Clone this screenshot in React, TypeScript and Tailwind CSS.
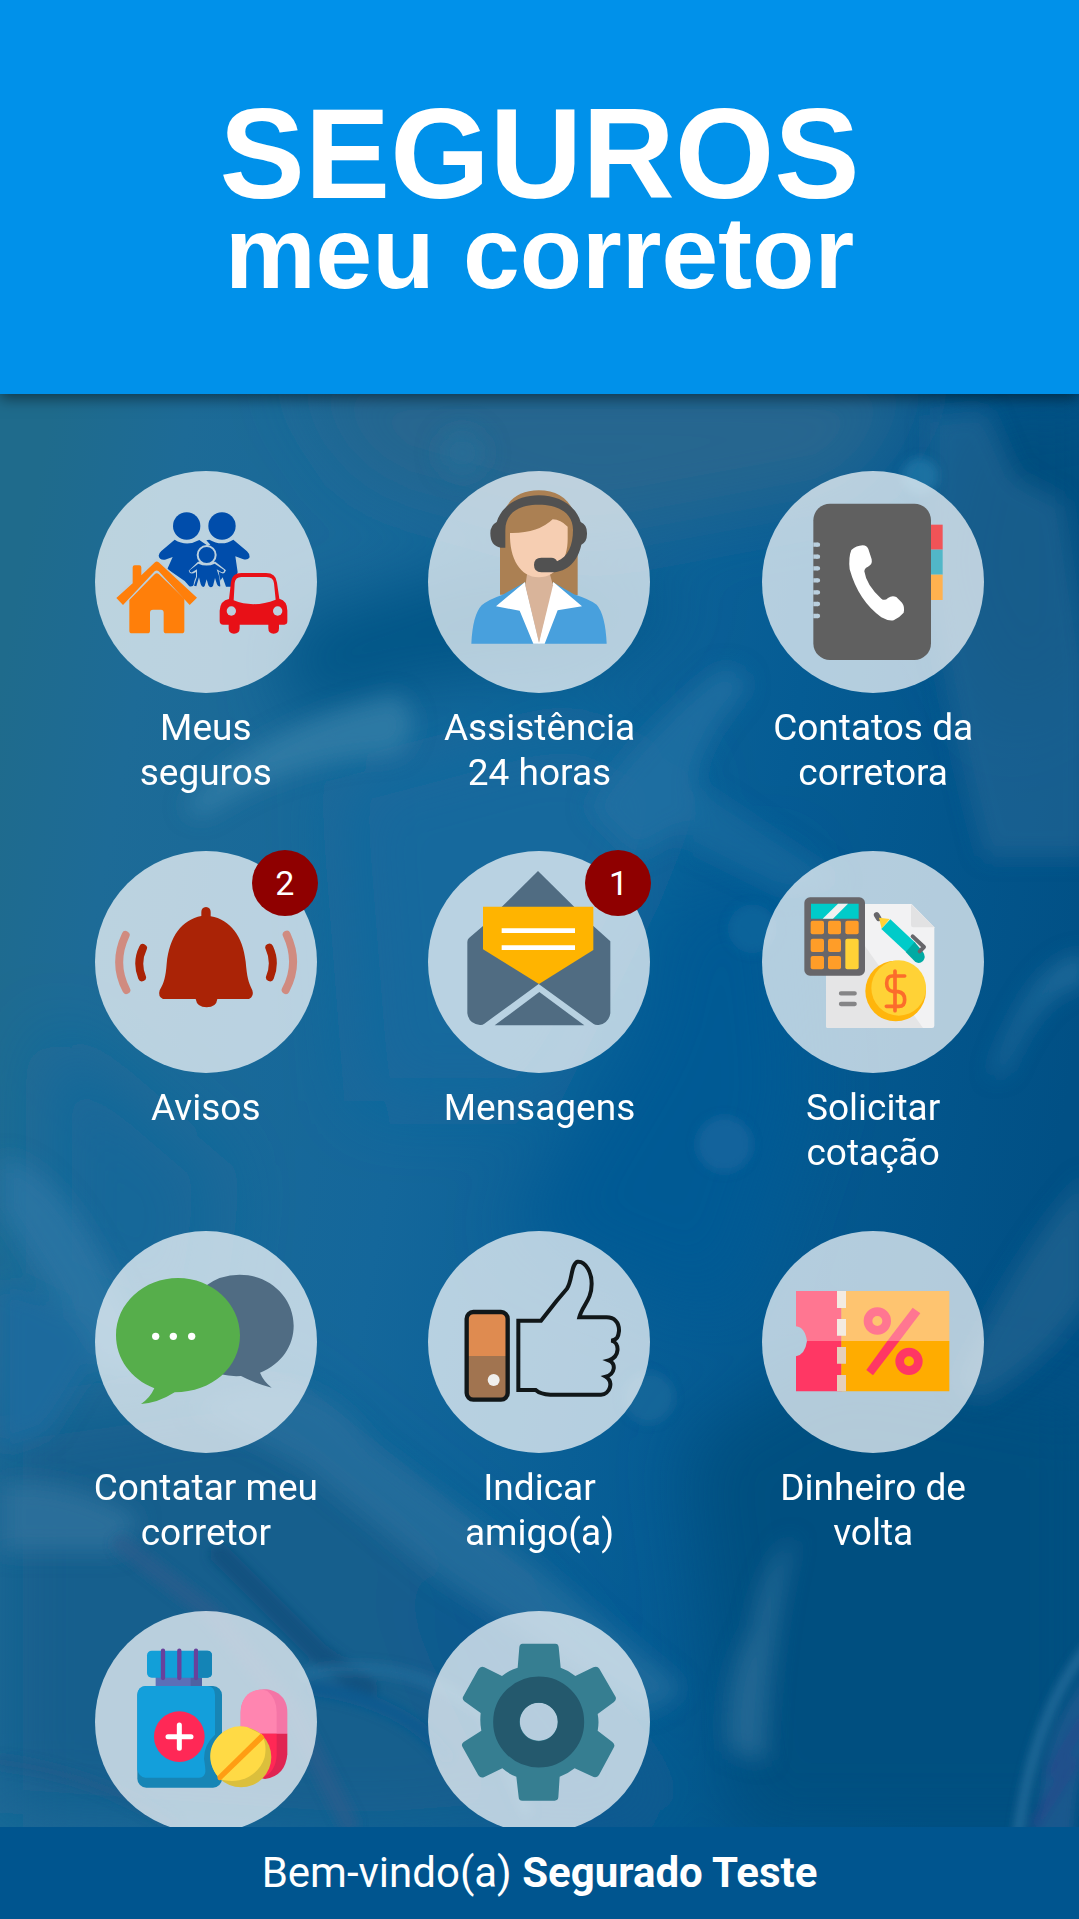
import type { ReactNode } from "react";

const halo = "#bbd0de";

function Insurance() {
  return (
    <>
      <g fill="#004dab">
        <circle cx="290" cy="196" r="41" />
        <circle cx="396" cy="196" r="41" />
        <path d="M254 237Q290 259 328 238L351 254V378H322Q316 376 314 366Q310 380 298 377L284 361L232 325L248 289L225 297Q208 299 206 285Q207 277 214 271Z" />
        <path d="M349 239L358 237Q396 259 430 237L471 272Q480 280 479 290Q473 300 458 295L436 287L443 335L426 378H408L398 350L378 378H340V262L361 252Z" />
      </g>
      <path d="M296 330Q300 345 318 334L318 349Q308 368 312 384H398L388 345L386 332Q402 346 408 329L376 303H324Z" fill={halo} />
      <g fill="#004dab">
        <path d="M325 309Q350 320 374 309L402 328Q404 336 394 334L380 326L388 349L391 377Q384 379 381 371L375 352L369 376Q361 385 355 374L350 356L344 376Q337 384 332 370L327 350L319 377L312 375L321 348V326L306 335Q298 336 299 329Z" />
        <circle cx="350" cy="283" r="27" stroke={halo} strokeWidth="6" />
      </g>
      <path d="M200 292L90 393L99 433L118 420L200 343L290 420L310 400Z" fill={halo} />
      <g fill="#ff7f0a">
        <path d="M128 320Q128 314 134 314H148Q154 314 154 320V344L195 305Q200 300 206 305L321 411L299 433L206 332Q200 327 194 332L99 433L79 412L128 368Z" />
        <path d="M194 341Q200 335 207 341L283 414V510Q283 518 275 518H229Q221 518 221 510V456Q221 447 213 447H189Q180 447 180 456V510Q180 518 172 518H126Q118 518 118 510V418Z" />
      </g>
      <path d="M417 415L423 364Q426 337 454 337H528Q558 337 561 366L568 414Q592 420 592 450V482Q592 492 583 492H567V503Q567 519 551 519Q535 519 535 503V492H449V503Q449 519 432 519Q416 519 416 503V492H400Q389 492 389 481V450Q391 419 417 415ZM431 419Q490 443 557 417L552 368Q550 349 529 349H454Q436 349 434 367Z" fill="#e81017" fillRule="evenodd" />
      <circle cx="424" cy="451" r="14" fill={halo} />
      <circle cx="563" cy="451" r="14" fill={halo} />
    </>
  );
}

function Attendant() {
  return (
    <>
      <path d="M242 402V220C242 135 284 89 358 89C432 89 475 136 475 220V404Z" fill="#ab8053" />
      <path d="M156 549Q160 463 187 434Q206 417 250 402L317 365L358 549ZM562 549Q558 461 532 432Q512 417 464 401L401 365L360 549Z" fill="#48a0dd" />
      <path d="M317 364L230 437L301 450L342 549H376L415 449L488 437L402 364L396 380L359 545L320 380Z" fill="#fff" />
      <path d="M318 375L359 546L401 374L390 335H324Z" fill="#d9b49a" />
      <path d="M272 217Q355 219 400 176Q424 177 445 198V235C445 295 415 349 358 350C303 349 270 295 272 217Z" fill="#f6ceb2" />
      <path d="M258 261H244Q213 256 213 218Q213 194 232 184C248 132 300 104 358 104C419 104 470 135 484 184Q504 192 503 220Q503 244 486 252C476 300 445 334 398 335H366Q344 335 344 313Q344 291 366 291H396Q409 291 413 302C446 288 461 255 461 207C461 158 418 132 358 132C298 132 258 157 258 209Z" fill="#515151" />
    </>
  );
}

function PhoneBook() {
  return (
    <>
      <path d="M540 192H578V267H540Z" fill="#f15357" />
      <path d="M540 267H578V342H540Z" fill="#51b7c8" />
      <path d="M540 342H578V418H540Z" fill="#ffb14f" />
      <rect x="190" y="129" width="353" height="469" rx="50" fill="#606060" />
      <path d="M190 252H203M190 288H203M190 323H203M190 359H203M190 395H203M190 430H203M190 466H203" stroke="#b9cfde" strokeWidth="13" />
      <path d="M203 252H204M203 288H204M203 323H204M203 359H204M203 395H204M203 430H204M203 466H204" stroke="#b9cfde" strokeWidth="13" strokeLinecap="round" />
      <path d="M304 268Q319 255 338 254Q351 255 355 265L365 296Q368 312 354 318Q344 321 343 332Q349 374 394 414Q404 422 414 412Q426 403 439 409L456 426Q465 438 461 456Q447 472 431 479Q415 482 394 470Q325 420 299 326Q295 290 304 268Z" fill="#fff" />
    </>
  );
}

function Bell() {
  return (
    <>
      <path d="M334 228V216Q334 202 348 201Q362 202 362 216V229C421 239 459 289 467 365C471 412 475 425 487 451Q493 469 477 477H382Q379 502 350 502Q321 502 317 477H219Q203 470 209 451C222 428 227 411 230 371C238 289 276 239 334 228Z" fill="#aa2306" />
      <g fill="none" strokeWidth="24" strokeLinecap="round">
        <path d="M159 324Q138 367 156 412M538 323Q558 367 540 412" stroke="#aa2306" />
        <path d="M107 285Q67 370 109 450M590 284Q630 370 587 450" stroke="#d08b80" />
      </g>
    </>
  );
}

function Envelope() {
  return (
    <>
      <path d="M356 93L466 202H246Z" fill="#506c82" />
      <path d="M191 258L149 294Q144 298 144 306V520Q149 552 182 555Q189 556 195 551L358 432L523 552Q528 556 538 555Q568 550 573 520V304L522 258Z" fill="#506c82" />
      <path d="M191 200H522V330L359 432L191 328Z" fill="#ffb400" />
      <path d="M247 265H467V279H247ZM247 316H467V330H247Z" fill="#fff" />
      <path d="M360 456L495 556H226Z" fill="#506c82" />
    </>
  );
}

function Quote() {
  return (
    <>
      <path d="M229 192H485L553 262V557Q553 564 546 564H235Q228 564 228 557Z" fill="#f2f2f3" />
      <path d="M228 290L325 290L519 564H235Q228 564 228 557Z" fill="#e5e5e6" />
      <path d="M483 192L553 262H490Q483 262 483 255Z" fill="#e2e2e3" />
      <path d="M273 460H314M273 492H314" stroke="#858587" strokeWidth="13" strokeLinecap="round" />
      <rect x="163" y="172" width="182" height="235" rx="17" fill="#67666a" />
      <path d="M183 191H326V236H183Z" fill="#00cbc9" />
      <path d="M264 191H294L249 236H218Z" fill="#f1f1f1" />
      <g fill="#ff9d28">
        <rect x="182" y="242" width="40" height="41" rx="6" />
        <rect x="234" y="242" width="39" height="41" rx="6" />
        <rect x="286" y="242" width="40" height="41" rx="6" />
        <rect x="182" y="296" width="40" height="40" rx="6" />
        <rect x="234" y="296" width="39" height="40" rx="6" />
        <rect x="182" y="348" width="40" height="40" rx="6" />
        <rect x="234" y="348" width="39" height="40" rx="6" />
      </g>
      <rect x="286" y="296" width="40" height="92" rx="6" fill="#ffd236" />
      <path d="M380 225L386 235" stroke="#67666a" strokeWidth="17" strokeLinecap="round" />
      <path d="M387 233L419 237L395 266Z" fill="#ffd236" />
      <path d="M421 238L394 267L469 337L496 308Z" fill="#00cbc9" />
      <path d="M494 306L467 336L494 364Q507 374 519 363Q529 350 519 336Z" fill="#00aaa3" />
      <path d="M488 289L522 321L509 334" stroke="#67666a" strokeWidth="12" fill="none" strokeLinecap="round" strokeLinejoin="round" />
      <circle cx="437" cy="453" r="91" fill="#ffb50b" />
      <ellipse cx="446" cy="444" rx="82" ry="83" fill="#ffd236" />
      <path d="M464 408H427Q410 408 410 430Q410 453 430 455H444Q464 458 464 479Q464 499 447 499H409M435 393V512" stroke="#fc6c2b" strokeWidth="11" fill="none" strokeLinecap="round" />
    </>
  );
}

function Chat() {
  return (
    <>
      <path d="M345 202Q389 167 449 167C539 167 611 235 611 320C611 378 577 434 510 461Q520 486 545 506Q493 492 453 471Q421 473 392 466Z" fill="#506c83" />
      <path d="M264 177C366 177 450 254 450 349C450 444 367 520 254 520Q204 552 153 555Q180 537 193 508C122 480 78 419 78 349C78 253 162 177 264 177Z" fill="#56ae4b" />
      <circle cx="197" cy="352" r="11" fill="#fff" />
      <circle cx="250" cy="352" r="11" fill="#fff" />
      <circle cx="305" cy="352" r="11" fill="#fff" />
    </>
  );
}

function ThumbUp() {
  return (
    <>
      <path d="M142 411V298Q142 278 162 278H244Q265 278 265 298V411Z" fill="#df8b50" />
      <path d="M142 411H265V522Q265 542 245 542H162Q142 542 142 522Z" fill="#a17450" />
      <rect x="142" y="279" width="123" height="263" rx="20" stroke="#111719" strokeWidth="13" fill="none" />
      <circle cx="223" cy="483" r="18" fill="#f0efed" />
      <path d="M349 513H297V305H365L411 247L443 209C460 183 454 136 475 128C500 126 517 162 517 194C517 244 489 259 480 295H562C584 295 600 309 599 336C597 354 594 362 576 365C602 371 602 414 568 424C592 433 587 466 559 473C585 489 571 526 545 527H393C373 526 359 522 349 513Z" stroke="#111719" strokeWidth="12" fill="none" />
    </>
  );
}

function Voucher() {
  return (
    <>
      <path d="M138 216H275V367H171Q165 325 138 322Z" fill="#ff7691" />
      <path d="M171 366H275V517H138V412Q165 407 171 366Z" fill="#ff3764" />
      <path d="M274 216H598V367H274Z" fill="#fec470" />
      <path d="M274 366H598V517H274Z" fill="#ffac00" />
      <path d="M261 216H288V267H261ZM261 300H288V350H261Z" fill="#f3ebe2" />
      <path d="M261 384H288V434H261ZM261 468H288V517H261Z" fill="#e5cfbb" />
      <circle cx="382" cy="306" r="28" stroke="#ff7691" strokeWidth="26" fill="none" />
      <circle cx="477" cy="427" r="28" stroke="#ff3764" strokeWidth="26" fill="none" />
      <path d="M488 266L511 283L448 366H412Z" fill="#ff7691" />
      <path d="M412 366H448L369 469L349 453Z" fill="#ff3764" />
    </>
  );
}

function Medicine() {
  return (
    <>
      <path d="M197 230H336V266H197Z" fill="#5b6fb8" />
      <path d="M302 230H336V266H302Z" fill="#4e62a3" />
      <rect x="171" y="156" width="195" height="81" rx="14" fill="#129fd8" />
      <path d="M325 156H352Q366 156 366 170V223Q366 237 352 237H325Z" fill="#1484b6" />
      <path d="M219 156V238M268 156V238M318 156V238" stroke="#68419c" strokeWidth="13" strokeLinecap="round" />
      <rect x="142" y="262" width="254" height="305" rx="27" fill="#1785b5" />
      <path d="M142 289Q142 262 169 262H352Q375 264 375 289V408Q342 437 342 480Q347 510 346 520Q344 536 328 537H166Q147 535 142 513Z" fill="#139fdb" />
      <circle cx="268" cy="414" r="76" fill="#ff2856" />
      <path d="M268 379V449M234 414H303" stroke="#fff" strokeWidth="15" strokeLinecap="round" />
      <path d="M452 406V340C452 250 592 248 592 340V406Z" fill="#f475a6" />
      <path d="M452 406V340C454 280 500 265 532 277Q560 299 560 342V406Z" fill="#ff85b0" />
      <path d="M452 405H592V467Q586 533 525 541Q470 531 452 480Z" fill="#e02452" />
      <path d="M452 405H560V470Q557 521 517 538Q465 525 452 480Z" fill="#ff2855" />
      <circle cx="453" cy="475" r="91" fill="#dbbf3c" />
      <path d="M392 542C354 507 349 449 386 412Q422 375 471 385L515 407Q532 439 524 476C510 525 453 561 392 542Z" fill="#ffda45" />
      <path d="M511 406Q521 407 523 419L394 543Q382 549 382 533Z" fill="#ff9d13" />
    </>
  );
}

function Gear() {
  return (
    <>
      <path d="M309 135H408Q417 135 418 145L424 207Q448 215 468 232L522 206Q534 201 540 210L589 295Q592 304 584 310L535 346Q540 371 535 396L579 430Q589 438 583 447L539 529Q531 540 518 533L466 509Q445 526 421 534L417 596Q416 606 406 606H309Q298 606 298 595L291 534Q268 526 249 509L195 535Q184 540 177 530L130 446Q124 437 133 430L186 396Q181 370 184 343L135 308Q127 301 132 293L177 212Q184 201 195 206L248 232Q270 214 295 207L300 146Q301 135 309 135ZM358 312A57 57 0 1 0 359 312Z" fill="#367e91" fillRule="evenodd" />
      <circle cx="358" cy="370" r="97" stroke="#24596d" strokeWidth="79" fill="none" />
    </>
  );
}

function Backdrop() {
  return (
    <svg className="absolute inset-0 h-full w-full" viewBox="0 322 882 1171" preserveAspectRatio="none" aria-hidden="true">
      <defs>
        <linearGradient id="base" x1="0" y1="0.2" x2="1" y2="0.45">
          <stop offset="0" stopColor="#1f6b8c" />
          <stop offset="0.12" stopColor="#1d6b97" />
          <stop offset="0.42" stopColor="#14679b" />
          <stop offset="0.7" stopColor="#055c94" />
          <stop offset="1" stopColor="#015085" />
        </linearGradient>
        <filter id="wide" x="-50%" y="-50%" width="200%" height="200%"><feGaussianBlur stdDeviation="28" /></filter>
        <filter id="mid" x="-50%" y="-50%" width="200%" height="200%"><feGaussianBlur stdDeviation="9" /></filter>
        <filter id="fine" x="-50%" y="-50%" width="200%" height="200%"><feGaussianBlur stdDeviation="4" /></filter>
      </defs>
      <path d="M0 322H882V1493H0Z" fill="url(#base)" />
      <g filter="url(#wide)">
        <path d="M240 300H760L700 400L480 440L300 390Z" fill="#27668f" />
        <path d="M230 510L400 460L560 490L480 540L330 560L240 590Z" fill="#035486" />
        <path d="M790 340L900 330V540L820 600L760 470Z" fill="#014d7e" />
        <path d="M280 640L470 590L560 640L520 740L440 900L300 900Z" fill="#14699d" />
        <path d="M540 740L640 700L660 900L600 1080L420 1010L520 840Z" fill="#045a94" />
        <path d="M560 1180L680 1110L900 1150V1500H600Z" fill="#014f80" />
        <path d="M0 1160L220 1130L420 1290L560 1480L300 1500L0 1480Z" fill="#195f8d" />
        <path d="M40 840L180 960L160 1100L40 1040Z" fill="#156799" />
        <path d="M320 1290L420 1300L540 1500H420Z" fill="#08598f" />
      </g>
      <g filter="url(#mid)">
        <path d="M150 660Q210 590 325 568Q350 590 325 617Q235 620 165 668Z" fill="#3580a8" opacity="0.75" />
        <path d="M480 660Q530 590 590 545Q620 550 606 570Q560 620 570 670L520 700Z" fill="#1f70a2" opacity="0.8" />
        <path d="M760 340L806 335L830 390L870 410L890 540V700L805 700Q775 590 760 480Z" fill="#296894" opacity="0.6" />
        <path d="M570 640L690 720L640 730L560 690Z" fill="#216fa2" opacity="0.5" />
        <circle cx="378" cy="370" r="20" fill="#246f9a" opacity="0.6" />
        <path d="M780 1130Q840 1010 890 960V1060Q860 1110 800 1145Z" fill="#236490" opacity="0.7" />
        <path d="M810 880Q845 780 890 780V804Q850 805 822 875Z" fill="#24709f" opacity="0.8" />
        <path d="M0 945Q45 950 90 1040L130 1120L85 1120L0 990Z" fill="#2b77a5" opacity="0.75" />
        <path d="M0 1050Q60 1060 78 1110L40 1170L0 1185Z" fill="#1e6b9d" />
        <path d="M0 1212Q55 1205 114 1240L100 1268H0Z" fill="#2d719c" opacity="0.85" />
        <path d="M155 1150Q250 1100 305 1180L440 1280L560 1380L530 1400L360 1290L250 1200Z" fill="#2a719f" opacity="0.65" />
        <path d="M595 1430Q590 1370 615 1330Q622 1280 650 1255Q630 1330 626 1440Z" fill="#2c6f9a" opacity="0.7" />
      </g>
      <g filter="url(#fine)" fill="none" strokeLinecap="round">
        <circle cx="592" cy="935" r="23" fill="#19699f" opacity="0.65" />
        <circle cx="530" cy="1142" r="21" fill="#216d9d" opacity="0.6" />
        <circle cx="752" cy="389" r="15" fill="#247aa9" opacity="0.7" />
        <circle cx="615" cy="759" r="20" fill="#146b9f" opacity="0.5" />
        <path d="M100 1262L175 1320L240 1400L285 1490" stroke="#2b5e8d" strokeWidth="16" opacity="0.65" />
        <path d="M180 1270L260 1350L300 1380" stroke="#0c4c7b" strokeWidth="18" opacity="0.7" />
        <path d="M250 1368Q330 1350 395 1400L430 1480" stroke="#29709e" strokeWidth="10" opacity="0.6" />
        <path d="M256 1380Q330 1390 365 1435" stroke="#0b5a8f" strokeWidth="12" />
        <path d="M0 1440Q80 1450 140 1490" stroke="#205a8a" strokeWidth="10" opacity="0.6" />
        <path d="M890 1345Q845 1400 832 1500" stroke="#367ba8" strokeWidth="7" opacity="0.7" />
        <path d="M900 1380Q865 1420 862 1500" stroke="#235c91" strokeWidth="30" opacity="0.75" />
        <path d="M884 1408L860 1448M878 1440L846 1490" stroke="#25498b" strokeWidth="9" opacity="0.7" />
      </g>
    </svg>
  );
}

type Item = { label: string; view: string; art: ReactNode; badge?: number; iconOnly?: boolean };

const items: Item[] = [
  { label: "Meus seguros", view: "15 31 666 666", art: <Insurance /> },
  { label: "Assistência 24 horas", view: "26 31 666 666", art: <Attendant /> },
  { label: "Contatos da corretora", view: "36 31 666 666", art: <PhoneBook /> },
  { label: "Avisos", view: "15 33 666 666", art: <Bell />, badge: 2 },
  { label: "Mensagens", view: "26 33 666 666", art: <Envelope />, badge: 1 },
  { label: "Solicitar cotação", view: "36 33 666 666", art: <Quote /> },
  { label: "Contatar meu corretor", view: "15 36 666 666", art: <Chat /> },
  { label: "Indicar amigo(a)", view: "26 36 666 666", art: <ThumbUp /> },
  { label: "Dinheiro de volta", view: "36 36 666 666", art: <Voucher /> },
  { label: "Medicamentos", view: "15 37 666 666", art: <Medicine />, iconOnly: true },
  { label: "Configurações", view: "26 37 666 666", art: <Gear />, iconOnly: true },
];

function Tile({ label, view, art, badge, iconOnly }: Item) {
  return (
    <button type="button" aria-label={iconOnly ? label : undefined} className="flex w-[228px] flex-col items-center justify-start">
      <span className="relative block size-[222px] rounded-full bg-white/70">
        <svg viewBox={view} className="size-full" aria-hidden="true">{art}</svg>
        {badge !== undefined && (
          <span className="absolute -top-px -right-px flex size-[66px] items-center justify-center rounded-full bg-[#8f0000] text-[34px] leading-none">
            {badge}
          </span>
        )}
      </span>
      {!iconOnly && <span className="mt-3 text-[37px] leading-[45px]">{label}</span>}
    </button>
  );
}

export default function App() {
  return (
    <div className="flex h-screen flex-col overflow-hidden bg-[#045a92] font-['Roboto',sans-serif] text-white">
      <header className="relative z-10 flex shrink-0 flex-col items-center bg-[#0091ea] pt-[90px] pb-[106px] font-['Liberation_Sans',Arial,sans-serif] font-bold shadow-[0_4px_14px_rgba(0,0,0,0.5)]">
        <h1 className="flex flex-col items-center whitespace-nowrap">
          <span className="text-[128px] leading-[128px]">SEGUROS</span>
          <span className="text-[102px] leading-[70px]">meu corretor</span>
        </h1>
      </header>
      <main className="relative min-h-0 flex-1 overflow-hidden">
        <Backdrop />
        <nav aria-label="Menu principal" className="relative grid grid-cols-3 justify-items-center gap-y-14 px-[39px] pt-[77px]">
          {items.map((item) => (
            <Tile key={item.label} {...item} />
          ))}
        </nav>
      </main>
      <footer className="relative z-10 flex h-[92px] shrink-0 items-center justify-center bg-[#00558f] text-[42px] leading-none">
        <p>
          Bem-vindo(a) <strong className="font-bold">Segurado Teste</strong>
        </p>
      </footer>
    </div>
  );
}
